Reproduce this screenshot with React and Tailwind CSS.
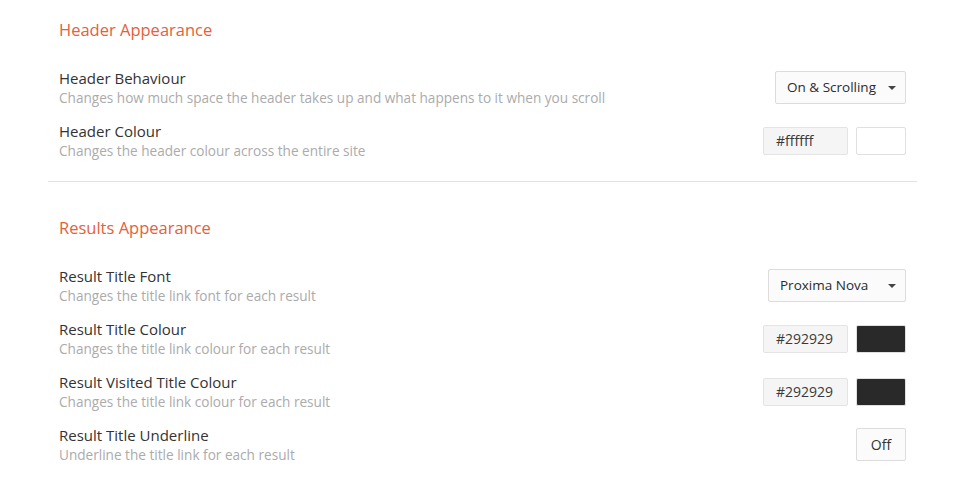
import React from 'react';

const Caret = () => (
    <svg width="8" height="4" viewBox="0 0 8 4" className="ml-auto">
        <path d="M0 0 L8 0 L4 4 Z" fill="#444" />
    </svg>
);

const Select = ({ value, width }) => (
    <div className={`flex items-center h-[33px] ${width} pl-[11px] pr-[9px] border border-[#dcdcdc] rounded-[2px] bg-[#fbfbfb] text-[13.5px] text-[#2b2b2b]`}>
        <span>{value}</span>
        <Caret />
    </div>
);

const ColourPicker = ({ hex, swatch }) => (
    <div className="flex items-center gap-[8px]">
        <div className="flex items-center h-[28px] w-[85px] pl-[12px] border border-[#e4e4e4] rounded-[2px] bg-[#f5f5f5] text-[14px] text-[#3a3a3a]">
            {hex}
        </div>
        <div className={`h-[28px] w-[50px] border border-[#e0e0e0] rounded-[2px] ${swatch}`} />
    </div>
);

const Row = ({ title, desc, children }) => (
    <div className="flex items-center justify-between h-[53px]">
        <div className="flex flex-col">
            <span className="text-[15px] leading-[19px] text-[#333333]">{title}</span>
            <span className="text-[13.6px] leading-[19px] text-[#ababab]">{desc}</span>
        </div>
        <div className="flex items-center">{children}</div>
    </div>
);

const Section = ({ title, children }) => (
    <div className="px-[11px]">
        <h2 className="text-[16.5px] leading-[20px] text-[#e5603b] mb-[21px]">{title}</h2>
        {children}
    </div>
);

export default function App() {
    return (
        <div className="bg-white w-[957px] h-[482px] pl-[48px] pr-[40px] pt-[20px]" style={{ fontFamily: '"Open Sans", Lato, sans-serif' }}>
            <Section title="Header Appearance">
                <Row title="Header Behaviour" desc="Changes how much space the header takes up and what happens to it when you scroll">
                    <Select value="On & Scrolling" width="w-[131px]" />
                </Row>
                <Row title="Header Colour" desc="Changes the header colour across the entire site">
                    <ColourPicker hex="#ffffff" swatch="bg-white" />
                </Row>
            </Section>

            <div className="h-[1px] bg-[#e3e3e3] mt-[14px] mb-[36px]" />

            <Section title="Results Appearance">
                <Row title="Result Title Font" desc="Changes the title link font for each result">
                    <Select value="Proxima Nova" width="w-[138px]" />
                </Row>
                <Row title="Result Title Colour" desc="Changes the title link colour for each result">
                    <ColourPicker hex="#292929" swatch="bg-[#292929]" />
                </Row>
                <Row title="Result Visited Title Colour" desc="Changes the title link colour for each result">
                    <ColourPicker hex="#292929" swatch="bg-[#292929]" />
                </Row>
                <Row title="Result Title Underline" desc="Underline the title link for each result">
                    <button className="h-[33px] w-[50px] border border-[#dcdcdc] rounded-[2px] bg-[#fbfbfb] text-[14px] text-[#333333]">
                        Off
                    </button>
                </Row>
            </Section>
        </div>
    );
}
